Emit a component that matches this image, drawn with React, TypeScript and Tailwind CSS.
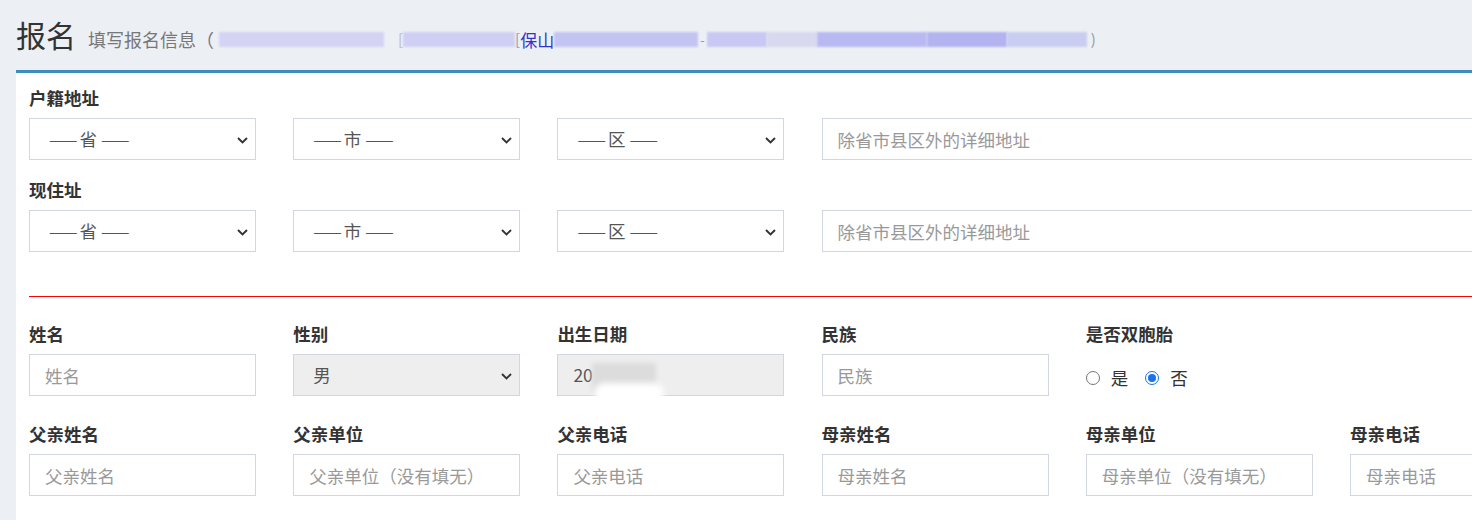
import React from "react";

const FONT = "font-['Microsoft_YaHei','Noto_Sans_CJK_SC',sans-serif]";

function Chevron() {
  return (
    <svg width="11" height="7" viewBox="0 0 11 7" className="absolute right-[7px] top-[18px]">
      <path d="M1 1 L5.5 5.5 L10 1" fill="none" stroke="#333" strokeWidth="1.9" />
    </svg>
  );
}

function SelectBox({ text, disabled, w = "w-[227px]" }: { text: React.ReactNode; disabled?: boolean; w?: string }) {
  return (
    <div
      className={`relative h-[42px] ${w} shrink-0 border border-[#d2d6de] ${disabled ? "bg-[#eeeeee]" : "bg-white"} flex items-center pl-[19px] text-[17.5px] text-[#555]`}
    >
      {text}
      <Chevron />
    </div>
  );
}

function Dashes({ c }: { c: string }) {
  return (
    <span className="flex items-center">
      <span className="text-[17px] tracking-[-2px]">——</span>
      <span className="mx-[4px]">{c}</span>
      <span className="text-[17px] tracking-[-2px]">——</span>
    </span>
  );
}

function TextInput({ ph, w = "w-[227px]" }: { ph: string; w?: string }) {
  return (
    <input
      readOnly
      placeholder={ph}
      className={`h-[42px] ${w} shrink-0 border border-[#d2d6de] bg-white px-[15px] text-[17.5px] text-[#555] placeholder:text-[#999] outline-none ${FONT}`}
    />
  );
}

function Label({ children }: { children: React.ReactNode }) {
  return <div className="h-[25px] leading-[25px] text-[17.5px] font-bold text-[#333] mb-[8px]">{children}</div>;
}

function Field({ label, children }: { label: string; children: React.ReactNode }) {
  return (
    <div className="w-[227px] shrink-0">
      <Label>{label}</Label>
      {children}
    </div>
  );
}

function Radio({ checked }: { checked?: boolean }) {
  return checked ? (
    <span className="w-[14px] h-[14px] rounded-full border-[1.5px] border-[#1a73e8] flex items-center justify-center">
      <span className="w-[8px] h-[8px] rounded-full bg-[#1a73e8]" />
    </span>
  ) : (
    <span className="w-[14px] h-[14px] rounded-full border border-[#767676] bg-white" />
  );
}

function AddressRow() {
  return (
    <div className="flex gap-x-[37.2px]">
      <SelectBox text={<Dashes c="省" />} />
      <SelectBox text={<Dashes c="市" />} />
      <SelectBox text={<Dashes c="区" />} />
      <TextInput ph="除省市县区外的详细地址" w="w-[900px]" />
    </div>
  );
}

export default function App() {
  return (
    <div className={`w-[1472px] h-[520px] overflow-hidden bg-[#ecf0f5] ${FONT}`}>
      {/* header */}
      <div className="h-[70px] pl-[16px] pt-[14px] flex items-baseline">
        <span className="text-[30px] leading-[40px] text-[#333]">报名</span>
        <span className="ml-[12px] text-[18px] text-[#777] flex items-baseline">
          填写报名信息（
          <span className="relative flex items-center h-[16px] self-center">
            <span className="ml-[5px] w-[165px] h-[15px] bg-[#d3d3f4] blur-[1px]" />
            <span className="ml-[14px] text-[#bbb] text-[15px]">[</span>
            <span className="w-[112px] h-[15px] bg-[#cfcff3] blur-[1px]" />
            <span className="text-[#999] text-[15px]">[</span>
            <span className="text-[#3333cc] text-[17px]">保山</span>
            <span className="w-[144px] h-[15px] bg-[#c4c4f2] blur-[1px]" />
            <span className="text-[#999] text-[13px] mx-[2px]">-</span>
            <span className="w-[60px] h-[15px] bg-[#c8c8f2] blur-[1px]" />
            <span className="w-[50px] h-[15px] bg-[#d8d8ef] blur-[1px]" />
            <span className="w-[110px] h-[15px] bg-[#b9b9f2] blur-[1px]" />
            <span className="w-[80px] h-[15px] bg-[#b3b3f0] blur-[1px]" />
            <span className="w-[80px] h-[15px] bg-[#c9cdf0] blur-[1px]" />
            <span className="text-[#999] text-[15px] ml-[4px]">)</span>
          </span>
        </span>
      </div>

      {/* card */}
      <div className="ml-[16px] w-[1700px] h-[460px] bg-white border-t-[3px] border-[#3c8dbc] pl-[13px] pt-[12px] text-[#333]">
        <Label>户籍地址</Label>
        <AddressRow />
        <div className="h-[17px]" />
        <Label>现住址</Label>
        <AddressRow />

        <div className="mt-[44px] h-px w-[1700px] bg-[#ff0000]" />

        <div className="mt-[24px] flex gap-x-[37.2px]">
          <Field label="姓名">
            <TextInput ph="姓名" />
          </Field>
          <Field label="性别">
            <SelectBox text="男" disabled />
          </Field>
          <Field label="出生日期">
            <div className="relative h-[42px] w-[227px] border border-[#d2d6de] bg-[#eeeeee] flex items-center pl-[15px] text-[17.5px] text-[#555]">
              20
              <span className="absolute left-[34px] top-[8px] w-[64px] h-[30px] bg-[#dcdcdc] blur-[2px]" />
              <span className="absolute left-[36px] top-[28px] w-[70px] h-[20px] bg-white blur-[3px] rounded-full" />
            </div>
          </Field>
          <Field label="民族">
            <TextInput ph="民族" />
          </Field>
          <Field label="是否双胞胎">
            <div className="h-[42px] flex items-center pt-[6px] text-[17.5px] text-[#333]">
              <Radio />
              <span className="ml-[11px]">是</span>
              <span className="ml-[17px]" />
              <Radio checked />
              <span className="ml-[11px]">否</span>
            </div>
          </Field>
        </div>

        <div className="mt-[25px] flex gap-x-[37.2px]">
          <Field label="父亲姓名">
            <TextInput ph="父亲姓名" />
          </Field>
          <Field label="父亲单位">
            <TextInput ph="父亲单位（没有填无）" />
          </Field>
          <Field label="父亲电话">
            <TextInput ph="父亲电话" />
          </Field>
          <Field label="母亲姓名">
            <TextInput ph="母亲姓名" />
          </Field>
          <Field label="母亲单位">
            <TextInput ph="母亲单位（没有填无）" />
          </Field>
          <Field label="母亲电话">
            <TextInput ph="母亲电话" />
          </Field>
        </div>
      </div>
    </div>
  );
}
